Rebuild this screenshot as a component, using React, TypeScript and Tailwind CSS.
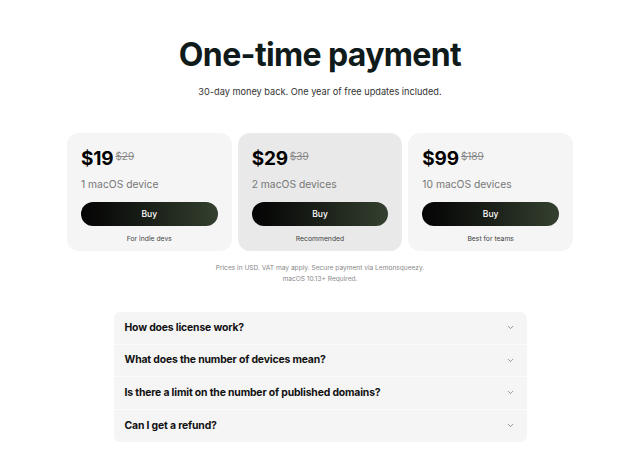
import React from 'react';

const plans = [
    { price: '$19', old: '$29', devices: '1 macOS device', note: 'For indie devs', highlight: false },
    { price: '$29', old: '$39', devices: '2 macOS devices', note: 'Recommended', highlight: true },
    { price: '$99', old: '$189', devices: '10 macOS devices', note: 'Best for teams', highlight: false },
];

const faqs = [
    'How does license work?',
    'What does the number of devices mean?',
    'Is there a limit on the number of published domains?',
    'Can I get a refund?',
];

const Chevron = () => (
    <svg width="9" height="9" viewBox="0 0 24 24" fill="none" stroke="#8a8a8a" strokeWidth="2.5" strokeLinecap="round" strokeLinejoin="round">
        <path d="M6 9l6 6 6-6" />
    </svg>
);

const App: React.FC = () => {
    return (
        <div className="min-h-screen bg-white font-['Inter',sans-serif] flex flex-col items-center">
            {/* HEADER */}
            <h1 className="mt-[35px] text-[32px] leading-[40px] font-bold tracking-[-0.02em] text-[#0f1a1a]">
                One-time payment
            </h1>
            <p className="mt-[10px] text-[9.2px] leading-[13px] text-[#333]">
                30-day money back. One year of free updates included.
            </p>

            {/* PLANS */}
            <div className="mt-[35px] grid grid-cols-3 gap-[6px] w-[506px]">
                {plans.map((p) => (
                    <div
                        key={p.price}
                        className={`h-[118px] rounded-[12px] px-[14px] pt-[15px] ${p.highlight ? 'bg-[#e9e9e9]' : 'bg-[#f5f5f5]'}`}
                    >
                        <div className="flex items-start gap-[2px]">
                            <span className="text-[19px] leading-[22px] font-bold text-black tracking-[-0.01em]">{p.price}</span>
                            <span className="mt-[2px] text-[10px] leading-[12px] text-[#888] line-through">{p.old}</span>
                        </div>
                        <div className="mt-[7px] text-[10.3px] leading-[14px] text-[#777]">{p.devices}</div>
                        <button className="mt-[11px] w-full h-[24px] rounded-full bg-gradient-to-r from-[#050505] to-[#34402f] text-white text-[8.5px] font-medium">
                            Buy
                        </button>
                        <div className="mt-[8px] text-center text-[6.8px] leading-[10px] text-[#444]">{p.note}</div>
                    </div>
                ))}
            </div>

            <div className="mt-[12px] text-center text-[6.6px] leading-[11px] text-[#888]">
                <p>Prices in USD. VAT may apply. Secure payment via Lemonsqueezy.</p>
                <p>macOS 10.13+ Required.</p>
            </div>

            {/* FAQ */}
            <div className="mt-[27px] w-[413px] rounded-[6px] bg-[#f5f5f5] divide-y divide-[#fbfbfb] overflow-hidden">
                {faqs.map((q) => (
                    <div key={q} className="h-[32.5px] flex items-center justify-between pl-[11px] pr-[12px]">
                        <span className="text-[10.4px] font-bold text-[#111] tracking-[-0.015em]">{q}</span>
                        <Chevron />
                    </div>
                ))}
            </div>
        </div>
    );
};

export default App;
